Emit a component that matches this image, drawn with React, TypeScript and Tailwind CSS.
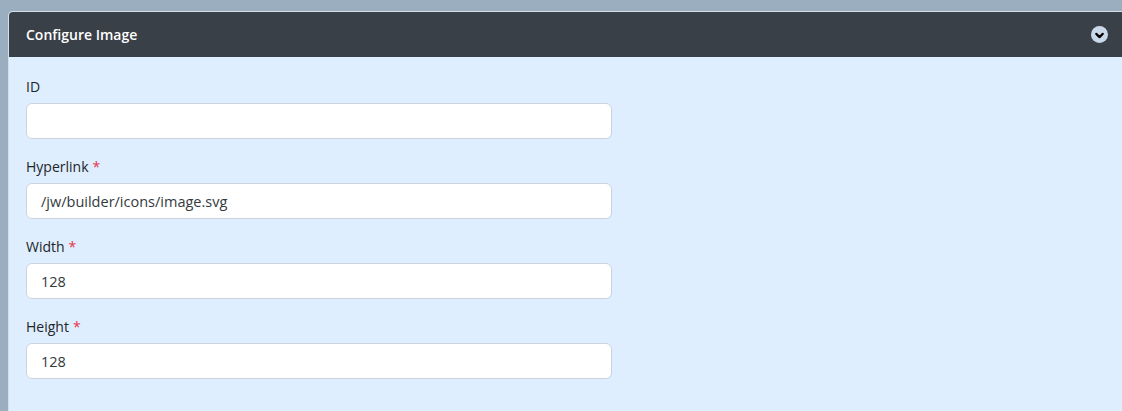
import { ChevronDown } from 'lucide-react'

const FIELDS = [
  { label: 'ID', value: '', required: false },
  { label: 'Hyperlink', value: '/jw/builder/icons/image.svg', required: true },
  { label: 'Width', value: '128', required: true },
  { label: 'Height', value: '128', required: true }
]

const Field = ({ label, value, required }: { label: string; value: string; required: boolean }) => (
  <div className="mb-[18px]">
    <label className="block h-[20px] text-[14px] leading-[20px] text-[#212529] mb-[6px]">
      {label}
      {required && <span className="ml-[4px] text-[#e8344a]">*</span>}
    </label>
    <input
      readOnly
      value={value}
      className="block w-[586px] h-[36px] rounded-[6px] border border-[#cbd3dc] bg-white px-[14px] text-[14.5px] text-[#333a40] outline-none"
    />
  </div>
)

export default function App() {
  return (
    <div
      className="h-[411px] w-full overflow-hidden bg-[#9aaec0] pt-[11px] pl-[8px]"
      style={{ fontFamily: '"Open Sans", "Noto Sans", sans-serif' }}
    >
      <div className="w-[1130px] h-[420px] rounded-tl-[5px] border-t border-l border-[#d6dee6] bg-[#deeefe] overflow-hidden">
        <div className="h-[45px] bg-[#394048] flex items-center justify-between pl-[17px] pr-[30px]">
          <span className="text-[14px] font-semibold text-white">Configure Image</span>
          <span className="flex h-[17px] w-[17px] items-center justify-center rounded-full bg-[#c9d9ea]">
            <ChevronDown size={13} strokeWidth={4} className="text-black mt-[1px]" />
          </span>
        </div>
        <div className="pt-[20px] pl-[17px]">
          {FIELDS.map(f => (
            <Field key={f.label} {...f} />
          ))}
        </div>
      </div>
    </div>
  )
}
